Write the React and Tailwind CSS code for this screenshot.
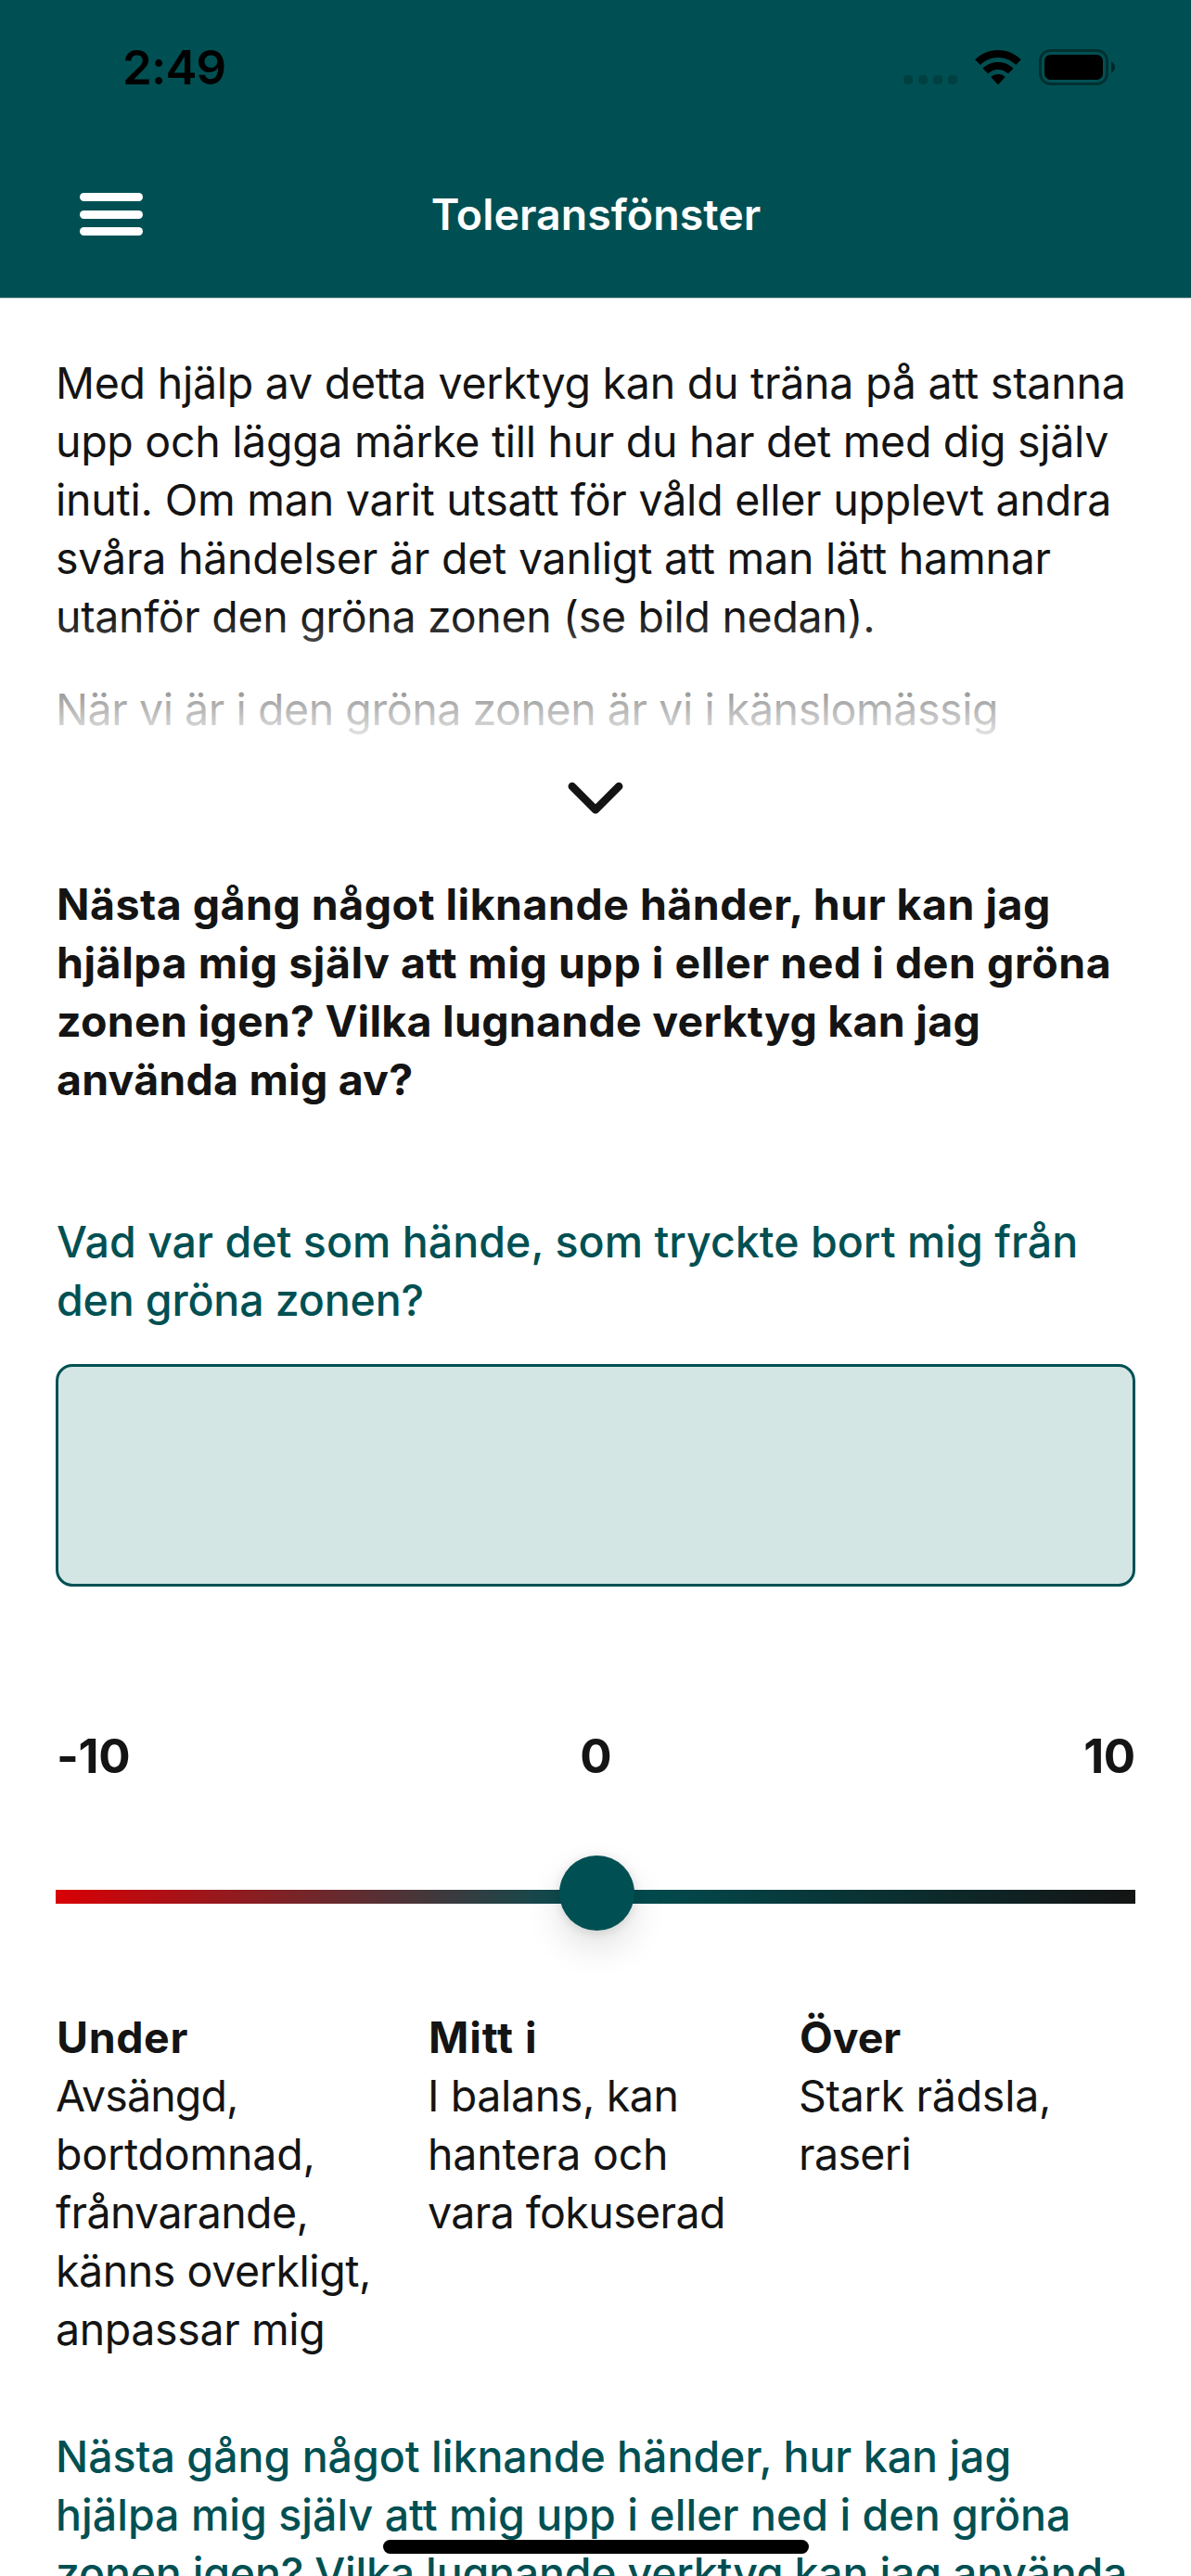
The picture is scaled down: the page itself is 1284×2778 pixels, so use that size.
import React from "react";

const intro = [
  ["Med hjälp av detta verktyg kan du träna på att stanna", "tracking-[-0.25px]"],
  ["upp och lägga märke till hur du har det med dig själv", "tracking-[-0.3px]"],
  ["inuti. Om man varit utsatt för våld eller upplevt andra", "tracking-[-0.22px]"],
  ["svåra händelser är det vanligt att man lätt hamnar", "tracking-[-0.22px]"],
  ["utanför den gröna zonen (se bild nedan).", "tracking-[-0.32px]"],
];

const introMore = [
  ["När vi är i den gröna zonen är vi i känslomässig", "tracking-[-0.44px]"],
];

const heading = [
  ["Nästa gång något liknande händer, hur kan jag", "tracking-[0.48px]"],
  ["hjälpa mig själv att mig upp i eller ned i den gröna", "tracking-[0.53px]"],
  ["zonen igen? Vilka lugnande verktyg kan jag", "tracking-[0.26px]"],
  ["använda mig av?", "tracking-[0.2px]"],
];

const question = [
  ["Vad var det som hände, som tryckte bort mig från", "tracking-[0.03px]"],
  ["den gröna zonen?", "tracking-[-0.15px]"],
];

const nextQuestion = [
  ["Nästa gång något liknande händer, hur kan jag", "tracking-[-0.02px]"],
  ["hjälpa mig själv att mig upp i eller ned i den gröna", "tracking-[0.02px]"],
  ["zonen igen? Vilka lugnande verktyg kan jag använda", "tracking-[-0.21px]"],
];

const zones = [
  {
    title: ["Under", "tracking-[0.6px]"],
    lines: [
      ["Avsängd,", "tracking-[-0.88px]"],
      ["bortdomnad,", "tracking-[-0.2px]"],
      ["frånvarande,", "tracking-[-0.63px]"],
      ["känns overkligt,", "tracking-[-0.43px]"],
      ["anpassar mig", "tracking-[-0.38px]"],
    ],
  },
  {
    title: ["Mitt i", "tracking-[0.93px]"],
    lines: [
      ["I balans, kan", "tracking-[-0.38px]"],
      ["hantera och", "tracking-[-0.2px]"],
      ["vara fokuserad", "tracking-[-0.59px]"],
    ],
  },
  {
    title: ["Över", "tracking-[-0.09px]"],
    lines: [
      ["Stark rädsla,", "tracking-[-0.27px]"],
      ["raseri", "tracking-[-0.6px]"],
    ],
  },
];

function Lines({ lines }) {
  return lines.map(([text, tracking]) => (
    <span key={text} className={`block whitespace-nowrap ${tracking}`}>
      {text}
    </span>
  ));
}

function WifiIcon() {
  return (
    <svg width="50" height="38" viewBox="0 0 50 38" fill="#000" className="block">
      <path d="M25 0C15.400 0 6.600 3.800 .2 10.300L5.800 16C10.800 11 17.600 7.900 25 7.900S39.200 11 44.200 16l5.600-5.700C43.400 3.800 34.600 0 25 0Z" />
      <path d="M25 13c-6.400 0-12.200 2.600-16.500 6.800l5.700 5.700C17 22.700 20.800 20.900 25 20.900s8 1.800 10.800 4.600l5.700-5.700C37.200 15.600 31.400 13 25 13Z" />
      <path d="M25 26c-3 0-5.700 1.200-7.700 3.100L25 37.400l7.700-8.300C30.700 27.200 28 26 25 26Z" />
    </svg>
  );
}

function BatteryIcon() {
  return (
    <svg width="82" height="39" viewBox="0 0 82 39" className="block">
      <rect x="1.500" y="1.500" width="72" height="36" rx="11" fill="none" stroke="#000" strokeOpacity="0.4" strokeWidth="3" />
      <rect x="6" y="6" width="63" height="27" rx="6.500" fill="#000" />
      <path d="M78 13.500c2.400 1 4 3.300 4 6s-1.600 5-4 6z" fill="#000" fillOpacity="0.5" />
    </svg>
  );
}

export default function App() {
  return (
    <div className="relative flex h-[2778px] w-[1284px] flex-col overflow-hidden bg-white font-['Inter',sans-serif] text-[46.5px] leading-[63px] text-[#141414]">
      <header className="h-[322px] shrink-0 border-b border-[#c4cfcf] bg-[#005053]">
        <div className="flex h-[145px] items-center justify-between pl-[132px] pr-[82px] text-black">
          <span className="text-[51px] font-semibold tracking-[-0.83px]">2:49</span>
          <div className="flex items-center">
            <div className="mr-[19px] mt-[27px] flex gap-1.5">
              <i className="size-2.5 rounded-[4px] bg-black/20" />
              <i className="size-2.5 rounded-[4px] bg-black/20" />
              <i className="size-2.5 rounded-[4px] bg-black/20" />
              <i className="size-2.5 rounded-[4px] bg-black/20" />
            </div>
            <div className="mr-[19px]">
              <WifiIcon />
            </div>
            <BatteryIcon />
          </div>
        </div>
        <div className="grid h-[172px] grid-cols-3 items-center">
          <div className="ml-[86px] flex w-[68px] flex-col gap-[9.5px]">
            <i className="h-[9px] rounded-full bg-white" />
            <i className="h-[9px] rounded-full bg-white" />
            <i className="h-[9px] rounded-full bg-white" />
          </div>
          <h1 className="pl-px text-center font-semibold tracking-[0.04px] text-white">Toleransfönster</h1>
        </div>
      </header>

      <main className="flex flex-col px-15 pt-[60px]">
        <section className="relative h-[429px]">
          <p>
            <Lines lines={intro} />
          </p>
          <p className="mt-[37px]">
            <Lines lines={introMore} />
          </p>
          <div className="absolute inset-x-0 bottom-0 h-[150px] bg-linear-to-b from-white/0 to-white" />
        </section>

        <svg width="60" height="36" viewBox="0 0 60 36" className="mt-[32px] self-center" fill="none" stroke="#141414" strokeWidth="8.5" strokeLinecap="round" strokeLinejoin="round">
          <path d="M4.800 5 30 30.200 55.200 5" />
        </svg>

        <h2 className="mt-[65px] pl-px font-bold">
          <Lines lines={heading} />
        </h2>

        <label className="mt-[112px] pl-px font-medium text-[#005053]">
          <Lines lines={question} />
        </label>
        <div className="mt-[37px] h-[240px] rounded-[18px] border-3 border-[#005053] bg-[#d3e6e3]" />

        <div className="mt-[151px] grid grid-cols-3 pl-px text-[51px] font-bold">
          <span className="tracking-[-0.27px]">-10</span>
          <span className="text-center">0</span>
          <span className="text-right tracking-[-0.27px]">10</span>
        </div>

        <div className="mt-[76px] flex h-[81px] items-center justify-center">
          <div className="mt-[8px] flex h-[15px] w-full items-center justify-center bg-[linear-gradient(to_right,#d90005_0%,#005053_50%,#141414_100%)]">
            <div className="-mt-[8px] ml-[3px] size-[81px] shrink-0 rounded-full bg-[#005053] shadow-[0_1.5px_12px_rgba(0,0,0,0.12),0_18px_39px_rgba(0,0,0,0.12)]" />
          </div>
        </div>

        <div className="mt-[84px] grid h-[378px] grid-cols-[401px_400px_363px]">
          {zones.map((zone) => (
            <div key={zone.title[0]}>
              <h3 className="pl-px font-bold">
                <Lines lines={[zone.title]} />
              </h3>
              <p>
                <Lines lines={zone.lines} />
              </p>
            </div>
          ))}
        </div>

        <p className="mt-[74px] font-medium text-[#005053]">
          <Lines lines={nextQuestion} />
        </p>
      </main>

      <div className="absolute bottom-6 left-[413px] h-[15px] w-[459px] rounded-full bg-black" />
    </div>
  );
}
